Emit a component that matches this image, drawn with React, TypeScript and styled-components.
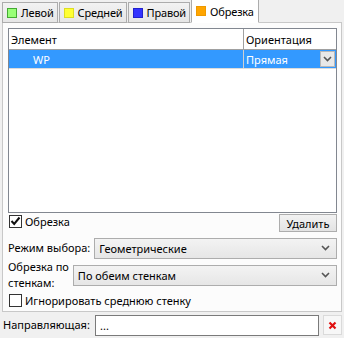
import styled, { createGlobalStyle } from 'styled-components'

const Global = createGlobalStyle`
  html, body {
    margin: 0;
    padding: 0;
    background: #f0f0f0;
  }
  body {
    font-family: "Noto Sans", "Open Sans", sans-serif;
    font-size: 11px;
    color: #000;
  }
`

const tabs = [
  { label: 'Левой', inner: '#99ff77', border: '#44aa33' },
  { label: 'Средней', inner: '#ffff33', border: '#dddd22' },
  { label: 'Правой', inner: '#3333ff', border: '#2222cc' },
  { label: 'Обрезка', inner: '#ffa500', border: '#ee9900' },
]

function Chevron() {
  return (
    <svg width="9" height="6" viewBox="0 0 9 6">
      <path d="M1 1 L4.5 4.5 L8 1" fill="none" stroke="#555" strokeWidth="1.6" />
    </svg>
  )
}

export default function App() {
  return (
    <>
      <Global />
      <Root>
        <TabBar>
          {tabs.map((t, i) => (
            <Tab key={t.label} $active={i === 3}>
              <Swatch $color={t.inner} $border={t.border} />
              {t.label}
            </Tab>
          ))}
        </TabBar>
        <Panel>
          <Grid>
            <HeaderRow>
              <HeadCell>Элемент</HeadCell>
              <HeadCell $right>Ориентация</HeadCell>
            </HeaderRow>
            <DataRow>
              <NameCell>WP</NameCell>
              <ComboCell>
                <span>Прямая</span>
                <CellDrop>
                  <Chevron />
                </CellDrop>
              </ComboCell>
            </DataRow>
          </Grid>
          <ActionRow>
            <Check $lift>
              <Box>
                <svg width="11" height="10" viewBox="0 0 11 10">
                  <path d="M1.5 5 L4.2 8 L9.5 1.5" fill="none" stroke="#111" strokeWidth="2" />
                </svg>
              </Box>
              Обрезка
            </Check>
            <Button>Удалить</Button>
          </ActionRow>
          <FieldRow $gapTop={5}>
            <Label>Режим выбора:</Label>
            <Select>
              <span>Геометрические</span>
              <Chevron />
            </Select>
          </FieldRow>
          <FieldRow $gapTop={0}>
            <Label>
              Обрезка по
              <br />
              стенкам:
            </Label>
            <Select>
              <span>По обеим стенкам</span>
              <Chevron />
            </Select>
          </FieldRow>
          <Check>
            <Box />
            Игнорировать среднюю стенку
          </Check>
        </Panel>
        <GuideRow>
          <Label>Направляющая:</Label>
          <Input>...</Input>
          <ClearButton>
            <svg width="9" height="9" viewBox="0 0 9 9">
              <path d="M1.5 1.5 L7.5 7.5 M7.5 1.5 L1.5 7.5" stroke="#e01010" strokeWidth="2.2" />
            </svg>
          </ClearButton>
        </GuideRow>
      </Root>
    </>
  )
}

const Root = styled.div`
  width: 344px;
  height: 338px;
  box-sizing: border-box;
  padding: 0 2px;
  display: flex;
  flex-direction: column;
`

const TabBar = styled.div`
  display: flex;
  align-items: flex-end;
  height: 23px;
  margin-bottom: -1px;
  position: relative;
  z-index: 1;
`

const Tab = styled.div<{ $active?: boolean }>`
  display: flex;
  align-items: center;
  gap: 4px;
  box-sizing: border-box;
  flex: none;
  height: ${({ $active }) => ($active ? '24px' : '21px')};
  padding: ${({ $active }) => ($active ? '0 4px 0 4px' : '0 3px 0 4px')};
  margin-right: 1px;
  border: 1px solid #acacac;
  border-bottom: ${({ $active }) => ($active ? '1px solid #fff' : '1px solid #acacac')};
  background: ${({ $active }) =>
    $active ? '#fff' : 'linear-gradient(#f2f2f2, #e6e6e6)'};
  white-space: nowrap;
  letter-spacing: -0.15px;
`

const Swatch = styled.span<{ $color: string; $border: string }>`
  flex: none;
  width: 8px;
  height: 8px;
  background: ${({ $color }) => $color};
  border: 1px solid ${({ $border }) => $border};
`

const Panel = styled.div`
  flex: none;
  height: 290px;
  box-sizing: border-box;
  border: 1px solid #c8c8c8;
  background: #fcfcfc;
  padding: 5px 4px 0 5px;
  display: flex;
  flex-direction: column;
`

const Grid = styled.div`
  height: 185px;
  box-sizing: border-box;
  border: 1px solid #828790;
  background: #fff;
`

const HeaderRow = styled.div`
  display: grid;
  grid-template-columns: 234px 1fr;
  height: 20px;
  border-bottom: 1px solid #a0a0a0;
`

const HeadCell = styled.div<{ $right?: boolean }>`
  display: flex;
  align-items: center;
  padding-left: 2px;
  border-left: ${({ $right }) => ($right ? '1px solid #a0a0a0' : 'none')};
`

const DataRow = styled.div`
  display: grid;
  grid-template-columns: 234px 1fr;
  height: 18px;
  background: #3399ff;
  color: #fff;
  border-bottom: 1px solid #dcdcdc;
`

const NameCell = styled.div`
  display: flex;
  align-items: center;
  padding-left: 24px;
`

const ComboCell = styled.div`
  display: flex;
  align-items: center;
  justify-content: space-between;
  padding-left: 2px;
  border-left: 1px solid #d0d0d0;
`

const CellDrop = styled.div`
  width: 15px;
  height: 16px;
  margin-right: 1px;
  display: flex;
  align-items: center;
  justify-content: center;
  background: #e8e8e8;
  border: 1px solid #b8b8b8;
  box-sizing: border-box;
`

const ActionRow = styled.div`
  display: flex;
  justify-content: space-between;
  align-items: flex-start;
  height: 18px;
  margin-top: 1px;
`

const Check = styled.label<{ $lift?: boolean }>`
  display: flex;
  align-items: center;
  gap: 3px;
  height: 18px;
  padding-left: 1px;
  margin-top: ${({ $lift }) => ($lift ? '-2px' : '0')};
`

const Box = styled.span`
  width: 13px;
  height: 13px;
  box-sizing: border-box;
  border: 1px solid #333;
  background: #fff;
  display: flex;
  align-items: center;
  justify-content: center;
`

const Button = styled.div`
  width: 58px;
  height: 18px;
  box-sizing: border-box;
  display: flex;
  align-items: center;
  justify-content: center;
  border: 1px solid #adadad;
  background: linear-gradient(#f2f2f2, #e3e3e3);
`

const FieldRow = styled.div<{ $gapTop: number }>`
  display: flex;
  align-items: center;
  gap: 4px;
  margin-top: ${({ $gapTop }) => $gapTop}px;
  min-height: 22px;
`

const Label = styled.div`
  white-space: nowrap;
  line-height: 16px;
  flex: none;
`

const Select = styled.div`
  flex: 1;
  height: 21px;
  box-sizing: border-box;
  border: 1px solid #adadad;
  background: linear-gradient(#f3f3f3, #e6e6e6);
  display: flex;
  align-items: center;
  justify-content: space-between;
  padding: 0 6px 0 4px;
`

const GuideRow = styled.div`
  display: flex;
  align-items: center;
  margin-top: 2px;
  padding-left: 1px;
  height: 22px;
`

const Input = styled.div`
  flex: none;
  width: 224px;
  height: 21px;
  margin-left: auto;
  box-sizing: border-box;
  border: 1px solid #7a7a7a;
  background: #fff;
  display: flex;
  align-items: center;
  padding-left: 4px;
`

const ClearButton = styled.div`
  flex: none;
  width: 19px;
  height: 20px;
  margin-left: 4px;
  box-sizing: border-box;
  border: 1px solid #dadada;
  background: #f7f7f7;
  display: flex;
  align-items: center;
  justify-content: center;
`
